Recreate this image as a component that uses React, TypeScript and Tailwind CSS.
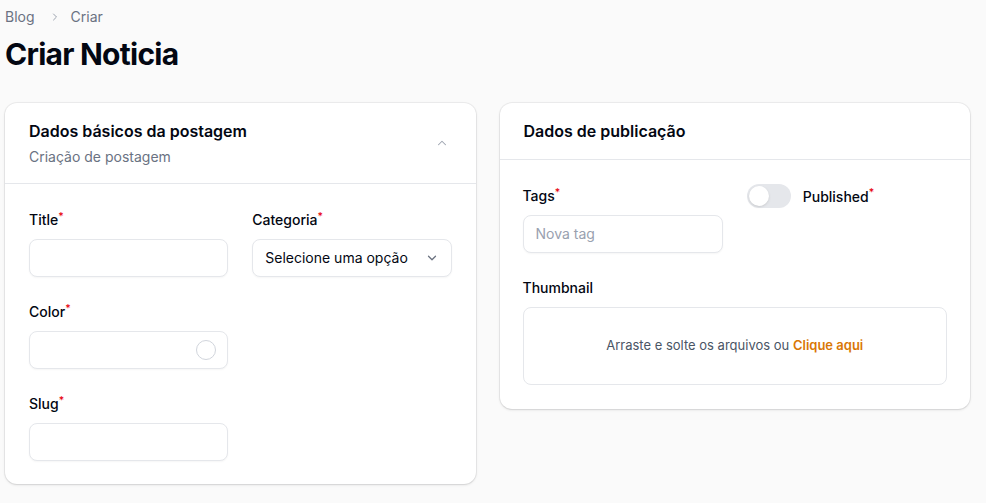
import React from "react";

function Label({ children, required }: { children: React.ReactNode; required?: boolean }) {
  return (
    <div className="text-sm font-medium leading-5 text-gray-950">
      {children}
      {required && <sup className="font-medium text-red-600">*</sup>}
    </div>
  );
}

function Input({ placeholder, children }: { placeholder?: string; children?: React.ReactNode }) {
  return (
    <div className="flex h-[38px] w-full items-center rounded-lg border border-gray-200 bg-white px-3 text-sm text-gray-400 shadow-[0_1px_2px_rgba(0,0,0,0.04)]">
      <span className="flex-1">{placeholder}</span>
      {children}
    </div>
  );
}

export default function App() {
  return (
    <div className="min-h-[503px] bg-[#fafafa] pl-[5px] pr-4 pt-[7px] font-['Inter',sans-serif]">
      <div className="flex items-center gap-[13px] text-sm leading-5 text-gray-500">
        <span>Blog</span>
        <svg width="10" height="10" viewBox="0 0 20 20" fill="none" stroke="#9ca3af" strokeWidth="2" className="ml-[2px]">
          <path d="M7 4l6 6-6 6" strokeLinecap="round" strokeLinejoin="round" />
        </svg>
        <span className="-ml-[2px]">Criar</span>
      </div>
      <h1 className="mt-[9px] text-[30px] font-bold leading-9 tracking-tight text-gray-950">Criar Noticia</h1>

      <div className="mt-[31px] grid grid-cols-2 items-start gap-6">
        <div className="rounded-xl bg-white shadow-sm ring-1 ring-gray-950/5">
          <div className="flex items-center border-b border-gray-200 px-6 py-4">
            <div className="flex-1">
              <div className="text-base font-semibold leading-6 text-gray-950">Dados básicos da postagem</div>
              <div className="mt-1 text-sm leading-5 text-gray-500">Criação de postagem</div>
            </div>
            <svg width="14" height="14" viewBox="0 0 20 20" fill="none" stroke="#9ca3af" strokeWidth="1.5" className="mr-[3px]">
              <path d="M5 12.5l5-5 5 5" strokeLinecap="round" strokeLinejoin="round" />
            </svg>
          </div>
          <div className="grid grid-cols-2 gap-x-6 gap-y-[25px] px-6 pb-[23px] pt-[26px]">
            <div className="flex flex-col gap-[9px]">
              <Label required>Title</Label>
              <Input />
            </div>
            <div className="flex flex-col gap-[9px]">
              <Label required>Categoria</Label>
              <div className="flex h-[38px] w-full items-center rounded-lg border border-gray-200 bg-white pl-3 pr-3 text-sm text-gray-950 shadow-[0_1px_2px_rgba(0,0,0,0.04)]">
                <span className="flex-1">Selecione uma opção</span>
                <svg width="14" height="14" viewBox="0 0 20 20" fill="none" stroke="#6b7280" strokeWidth="1.8">
                  <path d="M5 7.5l5 5 5-5" strokeLinecap="round" strokeLinejoin="round" />
                </svg>
              </div>
            </div>
            <div className="flex flex-col gap-[9px]">
              <Label required>Color</Label>
              <Input>
                <span className="-mr-[1px] h-5 w-5 rounded-full border border-gray-300" />
              </Input>
            </div>
            <div />
            <div className="flex flex-col gap-[9px]">
              <Label required>Slug</Label>
              <Input />
            </div>
          </div>
        </div>

        <div className="rounded-xl bg-white shadow-sm ring-1 ring-gray-950/5">
          <div className="border-b border-gray-200 px-6 py-4">
            <div className="text-base font-semibold leading-6 text-gray-950">Dados de publicação</div>
          </div>
          <div className="px-[23px] pb-6 pt-[26px]">
            <div className="grid grid-cols-2 gap-x-6">
              <div className="flex flex-col gap-[9px]">
                <Label required>Tags</Label>
                <Input placeholder="Nova tag" />
              </div>
              <div className="flex items-center gap-3 self-start">
                <span className="relative -mt-[2px] inline-flex h-6 w-11 items-center rounded-full bg-gray-200">
                  <span className="ml-[2px] h-5 w-5 rounded-full bg-white shadow" />
                </span>
                <div className="-mt-[1px]">
                  <Label required>Published</Label>
                </div>
              </div>
            </div>
            <div className="mt-[25px] flex flex-col gap-[9px]">
              <Label>Thumbnail</Label>
              <div className="flex h-[78px] items-center justify-center rounded-lg border border-gray-200 bg-white text-[13px] text-gray-600">
                <span>
                  Arraste e solte os arquivos ou <span className="font-semibold text-[#d97706]">Clique aqui</span>
                </span>
              </div>
            </div>
          </div>
        </div>
      </div>
    </div>
  );
}
